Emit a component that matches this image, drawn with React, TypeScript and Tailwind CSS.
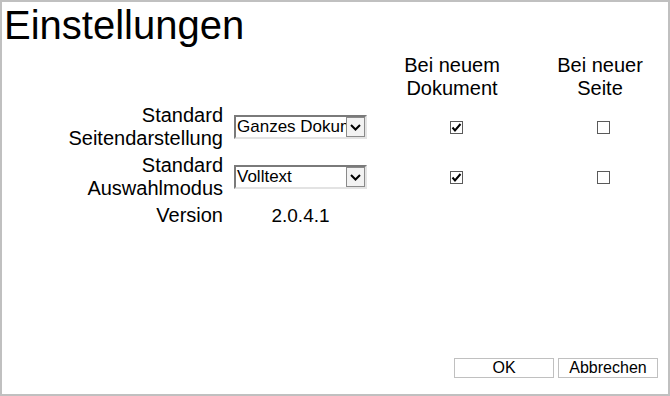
import React from "react";

function Select({ value }: { value: string }) {
  return (
    <div className="flex h-[24px] w-[133px] border-2 border-t-[#7a7a7a] border-l-[#7a7a7a] border-b-[#e3e3e3] border-r-[#e3e3e3] bg-white">
      <div className="flex-1 overflow-hidden whitespace-nowrap pl-[1px] text-[17px] leading-[20px] text-black">
        {value}
      </div>
      <div className="flex h-[20px] w-[19px] items-center justify-center border border-[#8a8a8a] bg-[#f2f2f2]">
        <svg width="11" height="7" viewBox="0 0 11 7">
          <polyline points="1,1 5.5,5.5 10,1" fill="none" stroke="#000" strokeWidth="2" />
        </svg>
      </div>
    </div>
  );
}

function Check({ checked }: { checked: boolean }) {
  return (
    <div className="flex h-[13px] w-[13px] items-center justify-center border border-[#5a5a5a] bg-white">
      {checked && (
        <svg width="11" height="11" viewBox="0 0 11 11">
          <polyline points="1.5,5.5 4,8.5 9.5,2" fill="none" stroke="#000" strokeWidth="2" />
        </svg>
      )}
    </div>
  );
}

export default function App() {
  const rows = [
    { label: ["Standard", "Seitendarstellung"], value: "Ganzes Dokument", doc: true, page: false },
    { label: ["Standard", "Auswahlmodus"], value: "Volltext", doc: true, page: false },
  ];

  return (
    <div
      className="flex h-[396px] w-[670px] flex-col overflow-hidden border-2 border-[#c0c0c0] bg-white text-black"
      style={{ fontFamily: '"Liberation Sans", Arial, sans-serif' }}
    >
      <h1 className="pl-[2px] text-[40px] leading-[46px]">Einstellungen</h1>

      <div className="mt-[6px] grid grid-cols-[221px_155px_148px_142px] gap-y-[4px] text-[20px] leading-[23px]">
        <div />
        <div />
        <div className="text-center">
          Bei neuem
          <br />
          Dokument
        </div>
        <div className="pl-[6px] text-center">
          Bei neuer
          <br />
          Seite
        </div>

        {rows.map((r) => (
          <React.Fragment key={r.label[1]}>
            <div className="text-right">
              {r.label[0]}
              <br />
              {r.label[1]}
            </div>
            <div className="flex items-center justify-center">
              <Select value={r.value} />
            </div>
            <div className="flex items-center justify-center pl-[8px]">
              <Check checked={r.doc} />
            </div>
            <div className="flex items-center justify-center pl-[12px]">
              <Check checked={r.page} />
            </div>
          </React.Fragment>
        ))}

        <div className="text-right">Version</div>
        <div className="flex items-center justify-center text-[19px]">2.0.4.1</div>
        <div />
        <div />
      </div>

      <div className="flex-1" />

      <div className="flex justify-end gap-[4px] pb-[16px] pr-[10px] text-[16px]">
        <button className="h-[20px] w-[100px] border border-[#c0c0c0] bg-white leading-[18px]">OK</button>
        <button className="h-[20px] w-[100px] border border-[#c0c0c0] bg-white leading-[18px]">Abbrechen</button>
      </div>
    </div>
  );
}
